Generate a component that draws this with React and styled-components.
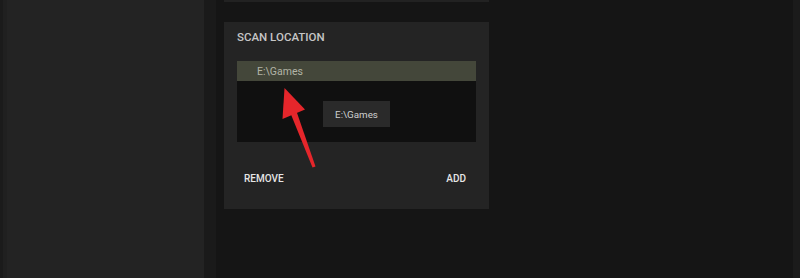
import React from "react";
import styled, { createGlobalStyle } from "styled-components";

const GlobalStyle = createGlobalStyle`
  html, body {
    margin: 0;
    padding: 0;
    background: #151515;
    font-family: Roboto, "Liberation Sans", Arial, sans-serif;
  }
  #root {
    height: 278px;
    overflow: hidden;
  }
`;

const Page = styled.div`
  position: relative;
  display: flex;
  height: 278px;
  background: #151515;
`;

const Sidebar = styled.div`
  width: 204px;
  flex-shrink: 0;
  display: flex;
  background: #232323;
  .edge {
    width: 7px;
    background: linear-gradient(90deg, #1b1b1b 0, #1b1b1b 3px, #202020 3px, #202020 7px);
  }
`;

const Gutter = styled.div`
  width: 12px;
  flex-shrink: 0;
  background: #1a1a1a;
`;

const Main = styled.div`
  flex: 1;
  display: flex;
  flex-direction: column;
  padding: 0 8px;
`;

const Column = styled.div`
  width: 265px;
  display: flex;
  flex-direction: column;
  gap: 20px;
`;

const TopCard = styled.div`
  height: 2px;
  background: #222222;
`;

const Card = styled.div`
  height: 187px;
  box-sizing: border-box;
  background: #242424;
  padding: 8px 13px 0;
  display: flex;
  flex-direction: column;
`;

const Title = styled.h3`
  margin: 0;
  font-size: 11.5px;
  font-weight: 500;
  line-height: 14px;
  color: #c6c6c6;
`;

const List = styled.div`
  position: relative;
  margin-top: 17px;
  height: 81px;
  background: #101010;
`;

const Row = styled.div`
  height: 20px;
  display: flex;
  align-items: center;
  padding-left: 20px;
  font-size: 10.5px;
  color: ${(p) => (p.selected ? "#b2b4a6" : "#bbbbbb")};
  background: ${(p) => (p.selected ? "#44473a" : "transparent")};
`;

const Tooltip = styled.div`
  position: absolute;
  left: 86px;
  top: 40px;
  width: 67px;
  height: 26px;
  display: flex;
  align-items: center;
  justify-content: center;
  background: #2a2a2a;
  color: #cfcfcf;
  font-size: 9.8px;
`;

const Actions = styled.div`
  display: flex;
  justify-content: space-between;
  margin-top: 30px;
`;

const ActionButton = styled.button`
  background: none;
  border: none;
  padding: 0 10px 0 7px;
  color: #e6e6e6;
  font-family: inherit;
  font-size: 10px;
  font-weight: 500;
  line-height: 14px;
  cursor: pointer;
`;

const RightEdge = styled.div`
  width: 7px;
  flex-shrink: 0;
  background: #1b1b1b;
`;

const Arrow = styled.svg`
  position: absolute;
  left: 0;
  top: 0;
  pointer-events: none;
`;

const App = () => {
  return (
    <>
      <GlobalStyle />
      <Page>
        <Sidebar>
          <div className="edge" />
        </Sidebar>
        <Gutter />
        <Main>
          <Column>
            <TopCard />
            <Card>
              <Title>SCAN LOCATION</Title>
              <List>
                <Row selected>E:\Games</Row>
                <Tooltip>E:\Games</Tooltip>
              </List>
              <Actions>
                <ActionButton>REMOVE</ActionButton>
                <ActionButton>ADD</ActionButton>
              </Actions>
            </Card>
          </Column>
        </Main>
        <RightEdge />
        <Arrow width="800" height="278" viewBox="0 0 800 278">
          <path d="M312.5 167.5 L315.5 166.5 L296 110 L290 112 Z" fill="#e5262b" />
          <path d="M284.5 88 L282.5 119 L305 109.5 Z" fill="#e5262b" />
        </Arrow>
      </Page>
    </>
  );
};

export default App;
